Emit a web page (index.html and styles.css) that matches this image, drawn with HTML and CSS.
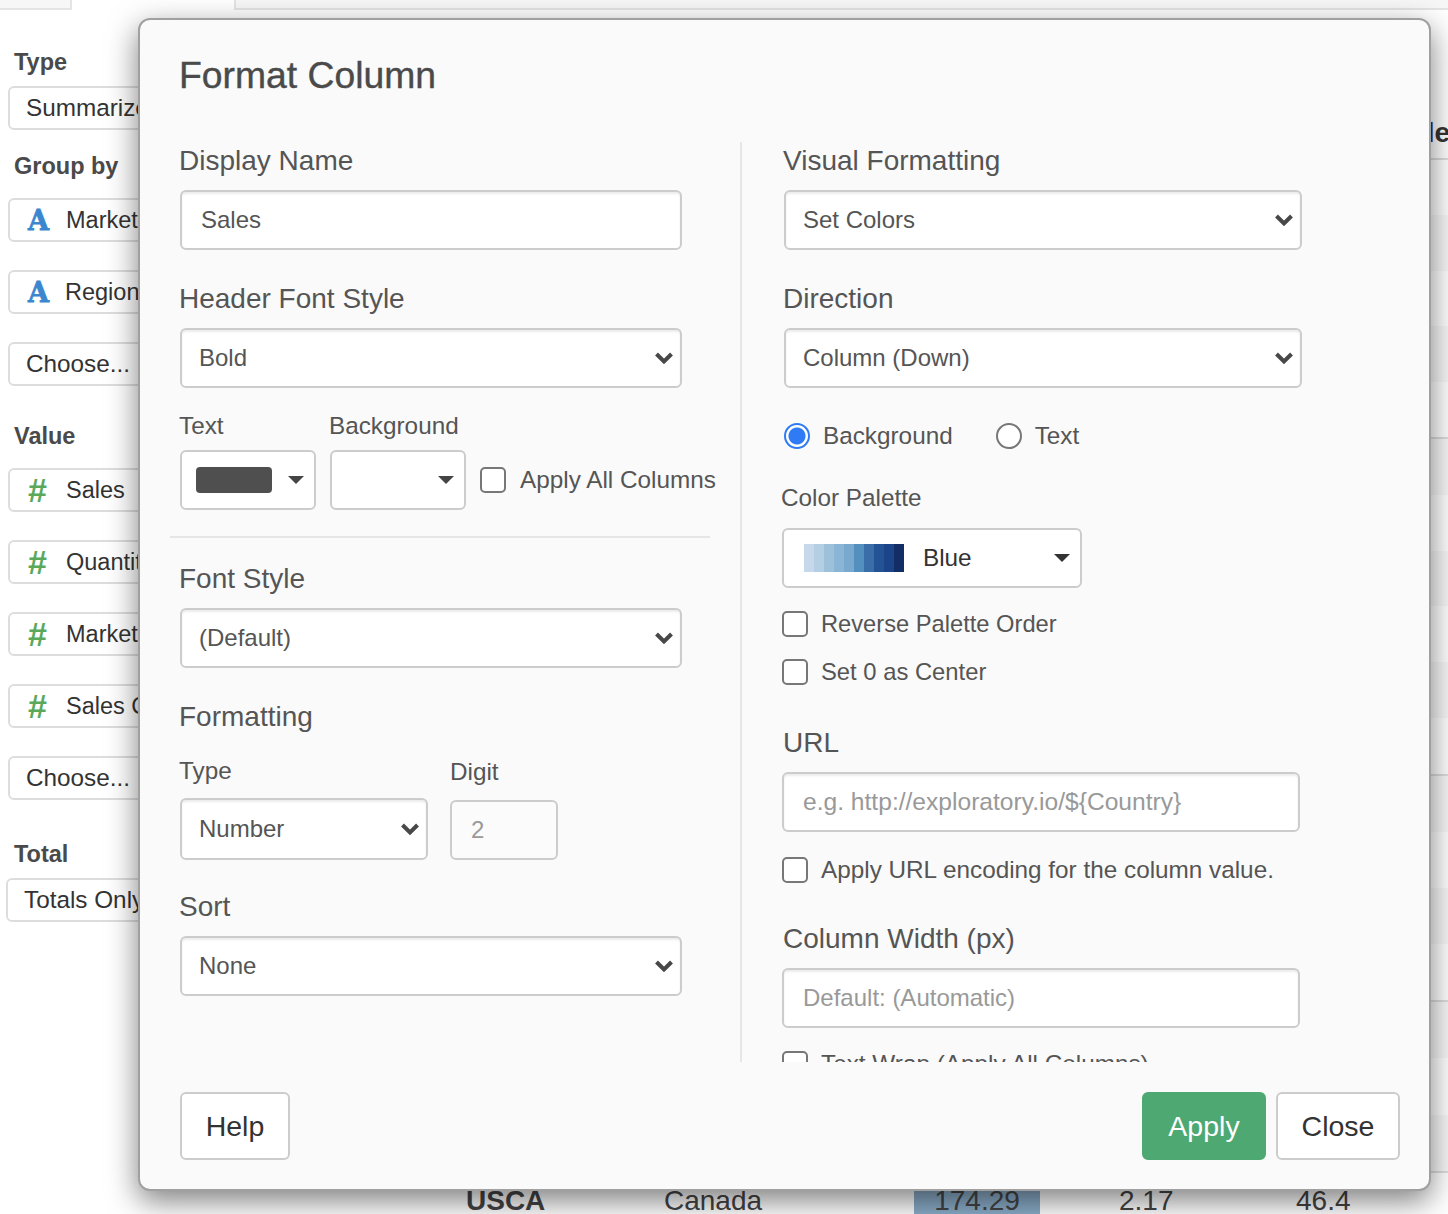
FILE: index.html
```html
<!DOCTYPE html>
<html>
<head>
  <title>Format Column</title>
  <link rel="stylesheet" href="styles.css">
</head>
<body>
  <div class="tabs">
    <div class="tab"></div>
    <div class="tab active"></div>
    <div class="tab rest"></div>
  </div>

  <div class="page">
    <div class="sidebar">
      <div class="side-label first">Type</div>
      <div class="side-item plain">Summarize</div>

      <div class="side-label group">Group by</div>
      <div class="side-item"><span class="icon-a">A</span>Market</div>
      <div class="side-item"><span class="icon-a">A</span><span class="nudge">Region</span></div>
      <div class="side-item plain">Choose...</div>

      <div class="side-label value">Value</div>
      <div class="side-item"><span class="icon-num">#</span>Sales</div>
      <div class="side-item"><span class="icon-num">#</span>Quantity</div>
      <div class="side-item"><span class="icon-num">#</span>Market</div>
      <div class="side-item"><span class="icon-num">#</span>Sales C</div>
      <div class="side-item plain">Choose...</div>

      <div class="side-label total">Total</div>
      <div class="side-item plain totals">Totals Only</div>
    </div>

    <div class="report">
      <div class="report-head">le</div>
      <div class="band b5">
        <div class="row"></div><div class="row alt"></div><div class="row"></div><div class="row alt"></div><div class="row"></div>
      </div>
      <div class="band b6">
        <div class="row alt"></div><div class="row"></div><div class="row alt"></div><div class="row"></div><div class="row alt"></div><div class="row"></div>
      </div>
      <div class="band b4">
        <div class="row alt"></div><div class="row"></div><div class="row alt"></div><div class="row"></div>
      </div>
      <div class="band b3">
        <div class="row alt"></div><div class="row"></div><div class="row alt"></div>
      </div>
      <div class="data-row">
        <span class="cell-market">USCA</span>
        <span class="cell-region">Canada</span>
        <span class="cell-sales">174.29</span>
        <span class="cell-qty">2.17</span>
        <span class="cell-last">46.4</span>
      </div>
    </div>
  </div>

  <div class="modal">
    <h2 class="modal-title">Format Column</h2>

    <div class="modal-body">
      <div class="col-left">
        <label class="field-label">Display Name</label>
        <input class="control wide" type="text" value="Sales">

        <label class="field-label">Header Font Style</label>
        <select class="control wide"><option>Bold</option></select>

        <div class="color-row">
          <div class="color-field">
            <div class="small-label">Text</div>
            <div class="color-btn"><span class="swatch"></span><span class="caret"></span></div>
          </div>
          <div class="color-field">
            <div class="small-label">Background</div>
            <div class="color-btn"><span class="swatch empty"></span><span class="caret"></span></div>
          </div>
          <label class="check apply-all"><input type="checkbox">Apply All Columns</label>
        </div>

        <hr class="divider">

        <label class="field-label">Font Style</label>
        <select class="control wide"><option>(Default)</option></select>

        <label class="field-label">Formatting</label>
        <div class="format-row">
          <div class="format-type">
            <div class="small-label type-label">Type</div>
            <select class="control number-select"><option>Number</option></select>
          </div>
          <div class="format-digit">
            <div class="small-label digit-label">Digit</div>
            <input class="control digit-input" type="text" placeholder="2">
          </div>
        </div>

        <label class="field-label">Sort</label>
        <select class="control wide"><option>None</option></select>
      </div>

      <div class="col-right">
        <label class="field-label">Visual Formatting</label>
        <select class="control right-select"><option>Set Colors</option></select>

        <label class="field-label">Direction</label>
        <select class="control right-select"><option>Column (Down)</option></select>

        <div class="radio-row">
          <label class="check"><input type="radio" name="target" checked>Background</label>
          <label class="check"><input type="radio" name="target">Text</label>
        </div>

        <div class="small-label palette-label">Color Palette</div>
        <div class="palette-select">
          <div class="palette">
            <span class="p1"></span><span class="p2"></span><span class="p3"></span><span class="p4"></span><span class="p5"></span>
            <span class="p6"></span><span class="p7"></span><span class="p8"></span><span class="p9"></span><span class="p10"></span>
          </div>
          <span class="palette-name">Blue</span>
          <span class="caret dark"></span>
        </div>

        <label class="check stacked first-check"><input type="checkbox">Reverse Palette Order</label>
        <label class="check stacked"><input type="checkbox">Set 0 as Center</label>

        <label class="field-label url-label">URL</label>
        <input class="control right-input url-input" type="text" placeholder="e.g. http://exploratory.io/${Country}">
        <label class="check stacked encode-check"><input type="checkbox">Apply URL encoding for the column value.</label>

        <label class="field-label width-label">Column Width (px)</label>
        <input class="control right-input" type="text" placeholder="Default: (Automatic)">
        <label class="check stacked wrap-check"><input type="checkbox">Text Wrap (Apply All Columns)</label>
      </div>
    </div>

    <div class="modal-footer">
      <button class="btn">Help</button>
      <div class="footer-right">
        <button class="btn primary">Apply</button>
        <button class="btn">Close</button>
      </div>
    </div>
  </div>
</body>
</html>
```

FILE: styles.css
```css
body {
  font-family: 'Liberation Sans', Arial, sans-serif;
  margin: 0;
  width: 1448px;
  height: 1214px;
  overflow: hidden;
  position: relative;
  background-color: #fff;
  color: #555;
}

/* top tab strip */
.tabs {
  display: flex;
  height: 10px;
}

.tab {
  width: 72px;
  background-color: #f7f7f7;
  border-bottom: 2px solid #e4e4e4;
  border-right: 2px solid #e4e4e4;
  box-sizing: border-box;
}

.tab.active {
  width: 164px;
  background-color: #fff;
  border-bottom: none;
}

.tab.rest {
  flex: 1;
  border-right: none;
}

.page {
  display: flex;
}

/* left panel, mostly behind the dialog */
.sidebar {
  width: 300px;
  flex-shrink: 0;
  padding-left: 8px;
  box-sizing: border-box;
}

.side-label {
  font-size: 23.5px;
  font-weight: bold;
  line-height: 32px;
  color: #4a4a4a;
  margin-left: 6px;
  margin-bottom: 16px;
}

.side-label.first {
  margin-top: 36px;
  margin-bottom: 8px;
}

.side-label.group {
  margin-top: -8px;
}

.side-label.value {
  margin-top: 34px;
}

.side-label.total {
  margin-top: 38px;
  margin-bottom: 8px;
}

.side-item {
  display: flex;
  align-items: center;
  height: 44px;
  box-sizing: border-box;
  border: 2px solid #ddd;
  border-radius: 6px;
  margin-bottom: 28px;
  padding-left: 18px;
  font-size: 23.5px;
  color: #333;
  background-color: #fff;
  white-space: nowrap;
}

.side-item.plain {
  padding-left: 16px;
  font-size: 24.3px;
}

.side-item.totals {
  margin-left: -2px;
}

.nudge {
  margin-left: -1px;
}

.icon-a {
  width: 38px;
  font-family: 'DejaVu Serif', serif;
  font-size: 27px;
  font-weight: bold;
  -webkit-text-stroke: 0.8px #3a86cf;
  color: #3a86cf;
}

.icon-num {
  width: 38px;
  font-size: 34px;
  line-height: 40px;
  font-weight: bold;
  color: #5aa85a;
}

/* report table behind the dialog */
.report {
  flex: 1;
}

.report-head {
  height: 150px;
  box-sizing: border-box;
  border-bottom: 2px solid #ddd;
  padding-top: 106px;
  margin-right: -2px;
  text-align: right;
  font-size: 28px;
  font-weight: bold;
  line-height: 34px;
  color: #333;
}

.band {
  display: flex;
  flex-direction: column;
  box-sizing: border-box;
  border-bottom: 2px solid #ddd;
}

.band.b5 { height: 279px; }
.band.b6 { height: 337px; }
.band.b4 { height: 226px; }
.band.b3 { height: 171px; }

.row {
  flex: 1;
}

.row.alt {
  background-color: #f8f8f8;
}

.data-row {
  position: relative;
  height: 56px;
  font-size: 28px;
  line-height: 56px;
  color: #444;
  display: flex;
}

.cell-market {
  margin-left: 166px;
  width: 198px;
  font-weight: bold;
}

.cell-region {
  width: 250px;
}

.cell-sales {
  width: 126px;
  text-align: center;
  background-color: #8aacc8;
}

.cell-qty {
  margin-left: 79px;
  width: 177px;
}

.cell-last {
  width: 60px;
}

/* dialog */
.modal {
  position: absolute;
  left: 138px;
  top: 18px;
  width: 1293px;
  height: 1173px;
  box-sizing: border-box;
  background-color: #fafafa;
  border: 2px solid #a0a0a0;
  border-radius: 12px;
  box-shadow: 0 10px 30px rgba(0,0,0,0.5);
}

.modal-title {
  margin: 0;
  height: 122px;
  padding: 32px 0 0 39px;
  box-sizing: border-box;
  font-size: 37.3px;
  font-weight: normal;
  -webkit-text-stroke: 0.4px #4a4a4a;
  line-height: 46px;
  color: #4a4a4a;
}

.modal-body {
  display: flex;
  height: 920px;
  overflow: hidden;
}

.col-left {
  width: 602px;
  padding-left: 40px;
  box-sizing: border-box;
  border-right: 2px solid #e6e6e6;
  flex-shrink: 0;
}

.col-left .field-label {
  margin-left: -1px;
}

.col-right {
  flex: 1;
  padding-left: 40px;
}

.field-label {
  display: block;
  font-size: 28px;
  line-height: 38px;
  margin-bottom: 10px;
  color: #555;
}

.col-right .field-label {
  margin-left: 1px;
}

.small-label {
  font-size: 24.3px;
  line-height: 30px;
  margin-bottom: 9px;
  color: #555;
}

.control {
  display: block;
  height: 60px;
  box-sizing: border-box;
  border: 2px solid #ccc;
  border-radius: 6px;
  background-color: #fff;
  box-shadow: inset 0 2px 2px rgba(0,0,0,0.075);
  font-family: 'Liberation Sans', Arial, sans-serif;
  font-size: 24px;
  color: #555;
  margin: 0 0 30px 0;
  padding: 0 19px;
  outline: none;
}

select.control {
  appearance: none;
  -webkit-appearance: none;
  padding: 0 19px 2px 17px;
  background-image: url("data:image/svg+xml,%3Csvg xmlns='http://www.w3.org/2000/svg' viewBox='0 0 20 14'%3E%3Cpath d='M2.5 3 10 10.5 17.5 3' fill='none' stroke='%23484848' stroke-width='4'/%3E%3C/svg%3E");
  background-repeat: no-repeat;
  background-position: right 6px center;
  background-size: 20px 14px;
}

.control::placeholder {
  color: #999;
  opacity: 1;
}

.control.wide {
  width: 502px;
}

.right-select {
  width: 518px;
  margin-left: 2px;
}

.right-input {
  width: 518px;
}

.url-input {
  font-size: 24.6px;
}

.color-row {
  display: flex;
  margin-top: -7px;
  align-items: flex-end;
}

.color-field {
  width: 136px;
  margin-right: 14px;
}

.color-field .small-label {
  margin-left: -1px;
}

.color-btn {
  display: flex;
  align-items: center;
  justify-content: space-between;
  height: 60px;
  box-sizing: border-box;
  border: 2px solid #ccc;
  border-radius: 6px;
  background-color: #fff;
  padding: 0 10px 0 14px;
}

.swatch {
  width: 76px;
  height: 26px;
  border-radius: 4px;
  background-color: #4f4f4f;
}

.swatch.empty {
  background-color: transparent;
}

.caret {
  width: 0;
  height: 0;
  border-left: 8px solid transparent;
  border-right: 8px solid transparent;
  border-top: 8px solid #444;
}

.caret.dark {
  border-top-color: #333;
}

.check {
  display: flex;
  align-items: center;
  font-size: 24.3px;
  line-height: 30px;
  color: #555;
  white-space: nowrap;
}

.check input {
  appearance: none;
  -webkit-appearance: none;
  width: 26px;
  height: 26px;
  box-sizing: border-box;
  margin: 0 13px 0 0;
  border: 2px solid #777;
  border-radius: 5px;
  background-color: #fff;
  flex-shrink: 0;
}

.check input[type=radio] {
  border-radius: 50%;
}

.check input[type=radio]:checked {
  border-color: #2f7bf6;
  background: radial-gradient(circle, #2f7bf6 0, #2f7bf6 8px, #fff 9px);
}

.apply-all {
  height: 60px;
}

.apply-all input {
  margin-right: 14px;
}

.divider {
  border: 0;
  height: 2px;
  background-color: #e6e6e6;
  width: 540px;
  margin: 26px 0 22px -10px;
}

.format-row {
  display: flex;
  align-items: flex-end;
  margin-top: 20px;
}

.format-type {
  margin-right: 22px;
}

.format-type .small-label {
  margin-left: -1px;
  margin-bottom: 12px;
}

.format-digit .small-label {
  margin-bottom: 13px;
}

.number-select {
  width: 248px;
  height: 62px;
  margin-bottom: 28px;
}

.digit-input {
  width: 108px;
  margin-bottom: 28px;
  box-shadow: none;
  background-color: #fbfbfb;
}

.radio-row {
  display: flex;
  gap: 43px;
  margin: 33px 0 0 2px;
  height: 30px;
}

.palette-label {
  margin-top: 32px;
  margin-bottom: 15px;
  margin-left: -1px;
}

.palette-select {
  display: flex;
  align-items: center;
  width: 300px;
  height: 60px;
  box-sizing: border-box;
  border: 2px solid #ccc;
  border-radius: 6px;
  background-color: #fff;
  padding: 0 10px 0 20px;
}

.palette {
  display: flex;
  width: 100px;
  height: 28px;
}

.palette span {
  flex: 1;
}

.p1 { background-color: #c6d8ea; }
.p2 { background-color: #b4cee3; }
.p3 { background-color: #9dc0db; }
.p4 { background-color: #8ab5d4; }
.p5 { background-color: #79a9cf; }
.p6 { background-color: #5490bf; }
.p7 { background-color: #3a6ea9; }
.p8 { background-color: #235394; }
.p9 { background-color: #1b4489; }
.p10 { background-color: #132e66; }

.palette-name {
  flex: 1;
  margin-left: 19px;
  font-size: 24.3px;
  color: #333;
}

.stacked {
  height: 30px;
  margin-bottom: 18px;
}

.first-check {
  margin-top: 21px;
  font-size: 23.7px;
}

.first-check + .stacked {
  font-size: 23.8px;
}

.url-label {
  margin-top: 37px;
  margin-bottom: 10px;
}

.encode-check {
  margin-top: -7px;
}

.width-label {
  margin-top: 35px;
}

.wrap-check {
  margin-top: -9px;
}

.modal-footer {
  display: flex;
  justify-content: space-between;
  padding: 30px 29px 0 40px;
}

.footer-right {
  display: flex;
  gap: 10px;
}

.btn {
  height: 68px;
  width: 110px;
  box-sizing: border-box;
  padding: 0;
  border: 2px solid #ccc;
  border-radius: 6px;
  background-color: #fff;
  font-family: 'Liberation Sans', Arial, sans-serif;
  font-size: 28.5px;
  color: #333;
}

.btn.primary {
  border-color: #4ea872;
  background-color: #4ea872;
  color: #fff;
}

.footer-right .btn {
  width: 124px;
}
```
